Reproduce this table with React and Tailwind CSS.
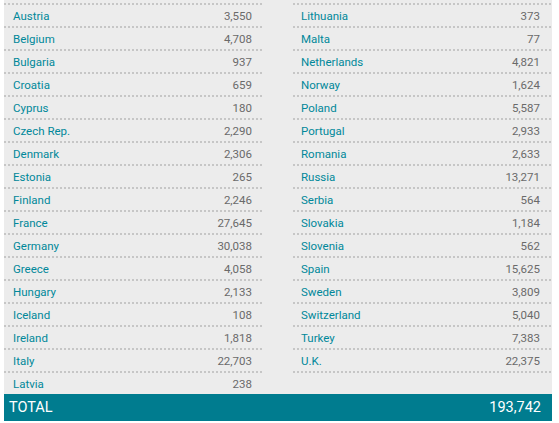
const left = [
  ["Austria", "3,550"],
  ["Belgium", "4,708"],
  ["Bulgaria", "937"],
  ["Croatia", "659"],
  ["Cyprus", "180"],
  ["Czech Rep.", "2,290"],
  ["Denmark", "2,306"],
  ["Estonia", "265"],
  ["Finland", "2,246"],
  ["France", "27,645"],
  ["Germany", "30,038"],
  ["Greece", "4,058"],
  ["Hungary", "2,133"],
  ["Iceland", "108"],
  ["Ireland", "1,818"],
  ["Italy", "22,703"],
  ["Latvia", "238"],
];

const right = [
  ["Lithuania", "373"],
  ["Malta", "77"],
  ["Netherlands", "4,821"],
  ["Norway", "1,624"],
  ["Poland", "5,587"],
  ["Portugal", "2,933"],
  ["Romania", "2,633"],
  ["Russia", "13,271"],
  ["Serbia", "564"],
  ["Slovakia", "1,184"],
  ["Slovenia", "562"],
  ["Spain", "15,625"],
  ["Sweden", "3,809"],
  ["Switzerland", "5,040"],
  ["Turkey", "7,383"],
  ["U.K.", "22,375"],
];

const dots =
  "h-[2px] bg-[linear-gradient(to_right,#c6c6c6_50%,transparent_50%)] bg-[length:4px_2px] bg-repeat-x";

function Row({ name, value, pad }) {
  return (
    <div>
      <div className={dots} />
      <div className={`flex h-[21px] items-center justify-between pt-[2px] ${pad}`}>
        <span className="text-[#00889a]">{name}</span>
        <span className="text-[#6a6a6a]">{value}</span>
      </div>
    </div>
  );
}

export default function App() {
  return (
    <div
      className="h-[423px] w-[559px] bg-white pl-1 text-[11.5px]"
      style={{ fontFamily: "Roboto, 'Liberation Sans', sans-serif" }}
    >
      <div className="w-[548px] bg-[#ececec] pt-[3px]">
        <div className="flex justify-between">
          <div className="w-[258px]">
            {left.map(([n, v]) => (
              <Row key={n} name={n} value={v} pad="pl-[9px] pr-[10px]" />
            ))}
          </div>
          <div className="w-[259px]">
            {right.map(([n, v]) => (
              <Row key={n} name={n} value={v} pad="pl-[8px] pr-[12px]" />
            ))}
            <div className={dots} />
          </div>
        </div>
      </div>
      <div className="flex h-[27px] w-[548px] items-center justify-between bg-[#007c8f] pl-[5px] pr-[11px] pt-[1px] text-[14.5px] text-white">
        <span>TOTAL</span>
        <span>193,742</span>
      </div>
    </div>
  );
}
